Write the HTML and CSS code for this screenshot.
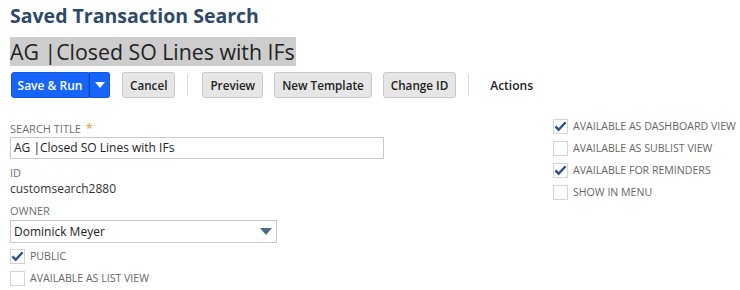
FILE: index.html
```html
<!DOCTYPE html>
<html>
<head>
<meta charset="utf-8">
<link rel="stylesheet" href="styles.css">
</head>
<body>
<div class="page">
  <h1 class="title">Saved Transaction Search</h1>
  <div class="subtitle"><span class="hl">AG |Closed SO Lines with IFs</span></div>
  <div class="toolbar">
    <div class="split">
      <button class="btn primary main">Save &amp; Run</button>
      <button class="btn primary caret"><svg width="10" height="6" viewBox="0 0 10 6"><path d="M0 0h10L5 6z" fill="#fff"/></svg></button>
    </div>
    <button class="btn">Cancel</button>
    <span class="sep"></span>
    <button class="btn">Preview</button>
    <button class="btn">New Template</button>
    <button class="btn">Change ID</button>
    <span class="sep"></span>
    <span class="actions">Actions</span>
  </div>
  <div class="form">
    <div class="left">
      <div class="label">SEARCH TITLE <span class="req">*</span></div>
      <div class="input">AG |Closed SO Lines with IFs</div>
      <div class="label lid">ID</div>
      <div class="value">customsearch2880</div>
      <div class="label lowner">OWNER</div>
      <div class="select"><span>Dominick Meyer</span><svg width="12" height="7" viewBox="0 0 12 7"><path d="M0 0h12L6 7z" fill="#4d6b8f"/></svg></div>
      <div class="check first"><span class="box"><svg width="14" height="12" viewBox="0 0 14 12"><path d="M1.5 6.5l3.5 3.5L12.5 2" fill="none" stroke="#2a5290" stroke-width="2.6"/></svg></span>PUBLIC</div>
      <div class="check"><span class="box"></span>AVAILABLE AS LIST VIEW</div>
    </div>
    <div class="right">
      <div class="check"><span class="box"><svg width="14" height="12" viewBox="0 0 14 12"><path d="M1.5 6.5l3.5 3.5L12.5 2" fill="none" stroke="#2a5290" stroke-width="2.6"/></svg></span>AVAILABLE AS DASHBOARD VIEW</div>
      <div class="check"><span class="box"></span>AVAILABLE AS SUBLIST VIEW</div>
      <div class="check"><span class="box"><svg width="14" height="12" viewBox="0 0 14 12"><path d="M1.5 6.5l3.5 3.5L12.5 2" fill="none" stroke="#2a5290" stroke-width="2.6"/></svg></span>AVAILABLE FOR REMINDERS</div>
      <div class="check"><span class="box"></span>SHOW IN MENU</div>
    </div>
  </div>
</div>
</body>
</html>
```

FILE: styles.css
```css
* { box-sizing: border-box; }
html, body { margin: 0; padding: 0; background: #fff; }
body { font-family: "Open Sans", "Liberation Sans", sans-serif; color: #333; }
.page { padding: 5px 10px 0 10px; }
.title { margin: 0; font-size: 19.5px; font-weight: 700; color: #2e4a6b; line-height: 22px; height: 24px; white-space: nowrap; }
.subtitle { margin-top: 8px; height: 30px; }
.hl { background: #cdcdcd; font-size: 21.3px; line-height: 29px; color: #222; display: inline-block; padding-right: 1px; white-space: nowrap; }
.toolbar { display: flex; align-items: center; margin-top: 5px; height: 26px; white-space: nowrap; }
.btn { font-family: "Open Sans", "Liberation Sans", sans-serif; font-size: 11.7px; font-weight: 600; height: 26px; padding: 0 7px; border: 1px solid #c8c8c8; border-radius: 3px; background: #e6e6e6; color: #222; margin-right: 11px; cursor: pointer; white-space: nowrap; }
.split { display: flex; margin-left: 1px; margin-right: 12px; }
.btn.primary { background: #1764fa; border-color: #1158e0; color: #fff; margin-right: 0; }
.btn.main { border-radius: 3px 0 0 3px; width: 78px; padding: 0; font-size: 12px; }
.btn.caret { border-radius: 0 3px 3px 0; width: 21px; padding: 0; border-left: 1px solid #0c45b0; display: flex; align-items: center; justify-content: center; }
.sep { width: 1px; height: 22px; background: #d8d8d8; margin: 0 14px 0 1px; }
.actions { font-size: 12px; font-weight: 600; color: #222; margin-left: 7px; }
.form { display: flex; margin-top: 23px; }
.left { width: 374px; flex: none; }
.right { margin-left: 169px; margin-top: -6px; }
.label { font-size: 11px; color: #6f6f6f; line-height: 14px; height: 14px; white-space: nowrap; }
.req { color: #e2922b; font-size: 13px; margin-left: 2px; }
.input { margin-top: 2px; height: 22px; border: 1px solid #c9c9c9; font-size: 12px; line-height: 20px; padding: 0 3px; color: #222; }
.lid { margin-top: 7px; }
.value { font-size: 12px; color: #333; line-height: 16px; margin-top: 1px; }
.lowner { margin-top: 7px; }
.select { margin-top: 2px; width: 267px; height: 23px; border: 1px solid #c9c9c9; font-size: 12px; line-height: 21px; padding: 0 4px 0 3px; color: #222; display: flex; justify-content: space-between; align-items: center; }
.check { display: flex; align-items: center; font-size: 10.6px; color: #666; height: 22px; white-space: nowrap; }
.check.first { margin-top: 2px; }
.box { width: 15px; height: 15px; border: 1px solid #d4d4d4; margin-right: 5px; display: flex; align-items: center; justify-content: center; background: #fff; flex: none; }
```
